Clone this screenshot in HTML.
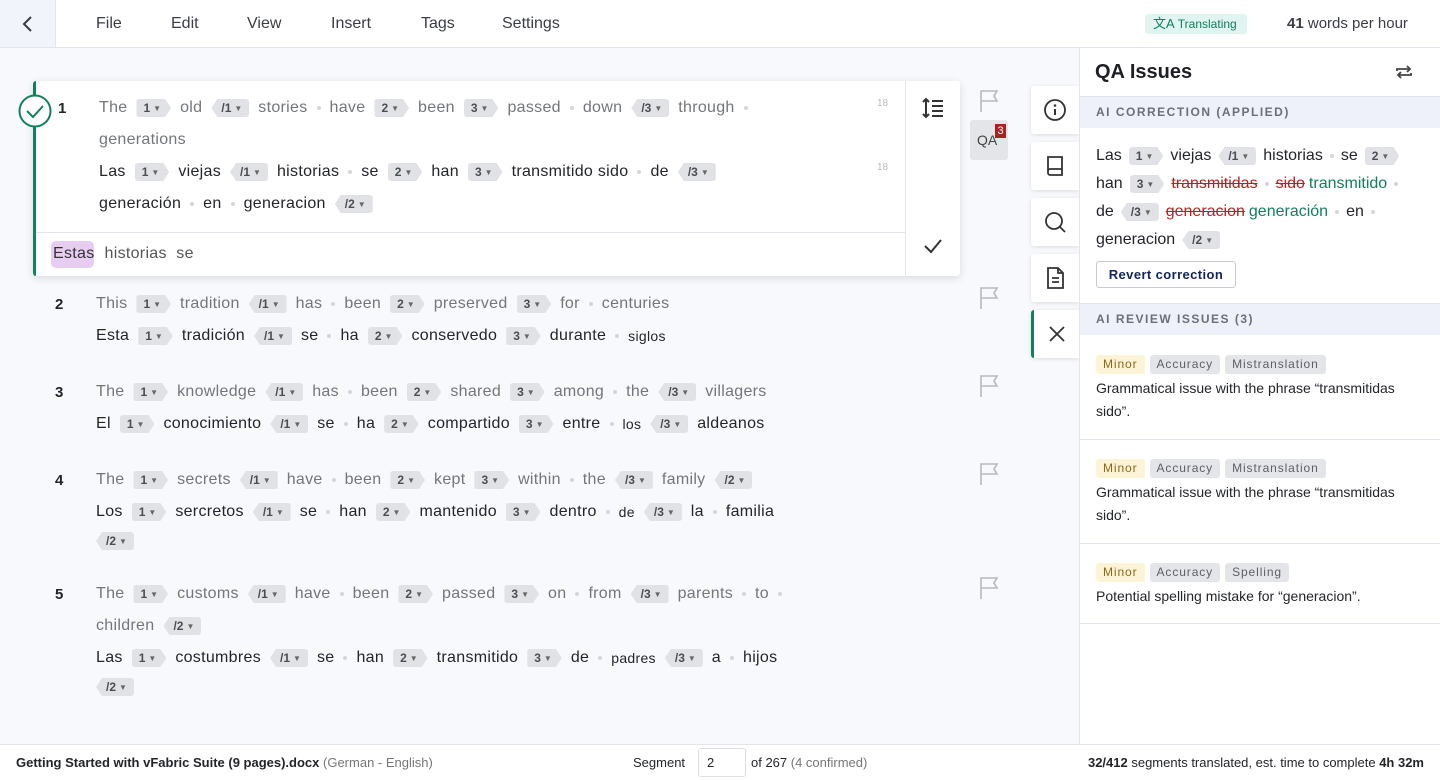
<!DOCTYPE html>
<html><head><meta charset="utf-8">
<style>
*{box-sizing:border-box;margin:0;padding:0}
body{width:1440px;height:780px;overflow:hidden;background:#f8f9fc;font-family:"Liberation Sans",sans-serif;color:#23252a;position:relative}
.abs{position:absolute}
.top{left:0;top:0;width:1440px;height:48px;background:#fff;border-bottom:1px solid #e3e5ea}
.back{left:0;top:0;width:56px;height:47px;background:#f1f4fb;border-right:1px solid #e3e5ea}
.menu{top:15px;font-size:16px;color:#3a3d44}
.line{position:absolute;display:flex;align-items:center;gap:9px;font-size:16px;white-space:nowrap;height:22px;letter-spacing:.3px}
.src{color:#73767c}
.tgt{color:#23252a}
.t{display:inline-flex;align-items:center;height:18px;background:#e1e2e6;font-size:12px;font-weight:bold;color:#4a4d54;padding:0 10px 0 7px;clip-path:polygon(0 0,calc(100% - 6px) 0,100% 50%,calc(100% - 6px) 100%,0 100%);border-radius:3px 0 0 3px;letter-spacing:0}
.c{display:inline-flex;align-items:center;height:18px;background:#e1e2e6;font-size:12px;font-weight:bold;color:#4a4d54;padding:0 7px 0 10px;clip-path:polygon(6px 0,100% 0,100% 100%,6px 100%,0 50%);border-radius:0 3px 3px 0;letter-spacing:0}
.t i,.c i{font-style:normal;font-size:8px;margin-left:3px;color:#666}
.d{width:4px;height:4px;border-radius:50%;background:#d4d6da;display:inline-block}
.num{position:absolute;font-size:15px;font-weight:bold;color:#23252a}
.flag{position:absolute}
.side{left:1031px;width:48px;height:48px;background:#fff;box-shadow:0 1px 4px rgba(0,0,0,.12);border-radius:3px 0 0 3px;display:flex;align-items:center;justify-content:center}
.rp{left:1079px;top:48px;width:361px;height:696px;background:#fff;border-left:1px solid #e3e5ea}
.rp .line{gap:7px;letter-spacing:0}
.sh{position:absolute;left:0;width:361px;height:31px;background:#eef1fa;font-size:12px;letter-spacing:1.5px;color:#6b6f78;padding:8px 16px;font-weight:bold}
.pill{display:inline-block;height:19px;line-height:19px;padding:0 7px;border-radius:3px;font-size:12px;letter-spacing:.9px;background:#e4e5e9;color:#5d6068;margin-right:5px}
.pill.m{background:#fdf3d6;color:#8a6a14}
.iss{position:absolute;left:16px;width:330px;font-size:14px;line-height:23px;color:#23252a}
.sep{position:absolute;left:0;width:361px;height:1px;background:#e3e5ea}
.bot{left:0;top:744px;width:1440px;height:36px;background:#fff;border-top:1px solid #e3e5ea;font-size:13px}
</style></head><body>
<div class="abs top"></div>
<div class="abs back"><svg class="abs" style="left:21px;top:15px" width="14" height="18" viewBox="0 0 14 18"><path d="M10 2 L3 9 L10 16" fill="none" stroke="#3a3d44" stroke-width="2"/></svg></div>
<div class="abs menu" style="left:96px">File</div>
<div class="abs menu" style="left:171px">Edit</div>
<div class="abs menu" style="left:247px">View</div>
<div class="abs menu" style="left:331px">Insert</div>
<div class="abs menu" style="left:421px">Tags</div>
<div class="abs menu" style="left:502px">Settings</div>
<div class="abs" style="left:1145px;top:14px;width:102px;height:20px;background:#e0f5ef;border-radius:3px;color:#12805c;font-size:12px;line-height:20px;padding-left:8px"><b style="font-weight:normal;font-size:13px">文A</b> Translating</div>
<div class="abs" style="left:1287px;top:15px;font-size:15px;color:#3a3d44"><b>41</b> words per hour</div>

<div class="abs" style="left:33px;top:81px;width:927px;height:195px;background:#fff;border-radius:3px;box-shadow:0 2px 8px rgba(30,40,70,.15);border-left:3px solid #12805c"></div>
<div class="abs" style="left:36px;top:232px;width:870px;height:1px;background:#e3e5ea"></div>
<div class="abs" style="left:905px;top:81px;width:1px;height:195px;background:#e3e5ea"></div>
<svg class="abs" style="left:18px;top:94px" width="34" height="34"><circle cx="17" cy="17" r="15.5" fill="#fff" stroke="#12805c" stroke-width="2"/><path d="M9 17 L15 23 L25 12" fill="none" stroke="#12805c" stroke-width="2"/></svg>
<div class="num" style="left:58px;top:100px">1</div>
<div class="line src" style="left:99px;top:97px">The <span class="t">1<i>▼</i></span> old <span class="c">/1<i>▼</i></span> stories <span class="d"></span> have <span class="t">2<i>▼</i></span> been <span class="t">3<i>▼</i></span> passed <span class="d"></span> down <span class="c">/3<i>▼</i></span> through <span class="d"></span></div>
<div class="line src" style="left:99px;top:129px">generations</div>
<div class="line tgt" style="left:99px;top:161px">Las <span class="t">1<i>▼</i></span> viejas <span class="c">/1<i>▼</i></span> historias <span class="d"></span> se <span class="t">2<i>▼</i></span> han <span class="t">3<i>▼</i></span> transmitido sido <span class="d"></span> de <span class="c">/3<i>▼</i></span></div>
<div class="line tgt" style="left:99px;top:193px">generación <span class="d"></span> en <span class="d"></span> generacion <span class="c">/2<i>▼</i></span></div>
<div class="abs" style="left:877px;top:98px;font-size:10px;color:#b7b9be">18</div>
<div class="abs" style="left:877px;top:162px;font-size:10px;color:#b7b9be">18</div>
<div class="abs" style="left:51px;top:241px;width:43px;height:27px;background:#e8cdf3;border-radius:5px"></div>
<div class="line" style="left:53px;top:243px;color:#555;gap:10px"><span style="color:#333">Estas</span> historias &nbsp;se</div>
<svg class="abs" style="left:922px;top:97px" width="22" height="22" viewBox="0 0 22 22"><path d="M4 2v18M1 5l3-3 3 3M1 17l3 3 3-3M10 4h11M10 9h11M10 14h11M10 19h11" fill="none" stroke="#333" stroke-width="2"/></svg>
<svg class="abs" style="left:923px;top:237px" width="20" height="18"><path d="M2 9 L8 15 L18 3" fill="none" stroke="#333" stroke-width="2"/></svg>

<svg class="flag" style="left:979px;top:89px" width="22" height="24" viewBox="0 0 22 24"><path d="M2 23V2h16l-3 5 3 5H2" fill="none" stroke="#b7b9be" stroke-width="1.6"/></svg>
<div class="abs" style="left:970px;top:120px;width:38px;height:40px;background:#e4e5e9;border-radius:3px;font-size:14px;color:#444;padding:12px 0 0 7px">QA</div>
<div class="abs" style="left:995px;top:124px;width:11px;height:14px;background:#a82222;color:#fff;font-size:11px;text-align:center;line-height:14px">3</div>
<svg class="flag" style="left:979px;top:286px" width="22" height="24" viewBox="0 0 22 24"><path d="M2 23V2h16l-3 5 3 5H2" fill="none" stroke="#b7b9be" stroke-width="1.6"/></svg>
<svg class="flag" style="left:979px;top:374px" width="22" height="24" viewBox="0 0 22 24"><path d="M2 23V2h16l-3 5 3 5H2" fill="none" stroke="#b7b9be" stroke-width="1.6"/></svg>
<svg class="flag" style="left:979px;top:462px" width="22" height="24" viewBox="0 0 22 24"><path d="M2 23V2h16l-3 5 3 5H2" fill="none" stroke="#b7b9be" stroke-width="1.6"/></svg>
<svg class="flag" style="left:979px;top:576px" width="22" height="24" viewBox="0 0 22 24"><path d="M2 23V2h16l-3 5 3 5H2" fill="none" stroke="#b7b9be" stroke-width="1.6"/></svg>

<div class="num" style="left:55px;top:296px">2</div>
<div class="line src" style="left:96px;top:293px">This <span class="t">1<i>▼</i></span> tradition <span class="c">/1<i>▼</i></span> has <span class="d"></span> been <span class="t">2<i>▼</i></span> preserved <span class="t">3<i>▼</i></span> for <span class="d"></span> centuries</div>
<div class="line tgt" style="left:96px;top:325px">Esta <span class="t">1<i>▼</i></span> tradición <span class="c">/1<i>▼</i></span> se <span class="d"></span> ha <span class="t">2<i>▼</i></span> conservedo <span class="t">3<i>▼</i></span> durante <span class="d"></span> <span style="font-size:14px">siglos</span></div>

<div class="num" style="left:55px;top:384px">3</div>
<div class="line src" style="left:96px;top:381px">The <span class="t">1<i>▼</i></span> knowledge <span class="c">/1<i>▼</i></span> has <span class="d"></span> been <span class="t">2<i>▼</i></span> shared <span class="t">3<i>▼</i></span> among <span class="d"></span> the <span class="c">/3<i>▼</i></span> villagers</div>
<div class="line tgt" style="left:96px;top:413px">El <span class="t">1<i>▼</i></span> conocimiento <span class="c">/1<i>▼</i></span> se <span class="d"></span> ha <span class="t">2<i>▼</i></span> compartido <span class="t">3<i>▼</i></span> entre <span class="d"></span> <span style="font-size:14px">los</span> <span class="c">/3<i>▼</i></span> aldeanos</div>

<div class="num" style="left:55px;top:472px">4</div>
<div class="line src" style="left:96px;top:469px">The <span class="t">1<i>▼</i></span> secrets <span class="c">/1<i>▼</i></span> have <span class="d"></span> been <span class="t">2<i>▼</i></span> kept <span class="t">3<i>▼</i></span> within <span class="d"></span> the <span class="c">/3<i>▼</i></span> family <span class="c">/2<i>▼</i></span></div>
<div class="line tgt" style="left:96px;top:501px">Los <span class="t">1<i>▼</i></span> sercretos <span class="c">/1<i>▼</i></span> se <span class="d"></span> han <span class="t">2<i>▼</i></span> mantenido <span class="t">3<i>▼</i></span> dentro <span class="d"></span> <span style="font-size:14px">de</span> <span class="c">/3<i>▼</i></span> la <span class="d"></span> familia</div>
<div class="line tgt" style="left:96px;top:530px"><span class="c">/2<i>▼</i></span></div>

<div class="num" style="left:55px;top:586px">5</div>
<div class="line src" style="left:96px;top:583px">The <span class="t">1<i>▼</i></span> customs <span class="c">/1<i>▼</i></span> have <span class="d"></span> been <span class="t">2<i>▼</i></span> passed <span class="t">3<i>▼</i></span> on <span class="d"></span> from <span class="c">/3<i>▼</i></span> parents <span class="d"></span> to <span class="d"></span></div>
<div class="line src" style="left:96px;top:615px">children <span class="c">/2<i>▼</i></span></div>
<div class="line tgt" style="left:96px;top:647px">Las <span class="t">1<i>▼</i></span> costumbres <span class="c">/1<i>▼</i></span> se <span class="d"></span> han <span class="t">2<i>▼</i></span> transmitido <span class="t">3<i>▼</i></span> de <span class="d"></span> <span style="font-size:14px">padres</span> <span class="c">/3<i>▼</i></span> a <span class="d"></span> hijos</div>
<div class="line tgt" style="left:96px;top:676px"><span class="c">/2<i>▼</i></span></div>

<div class="abs side" style="top:86px"><svg width="24" height="24"><circle cx="12" cy="12" r="10" fill="none" stroke="#333" stroke-width="1.8"/><path d="M12 11v6" stroke="#333" stroke-width="2"/><circle cx="12" cy="7.5" r="1.3" fill="#333"/></svg></div>
<div class="abs side" style="top:142px"><svg width="24" height="24"><path d="M5 3h14v18H7a2 2 0 0 1-2-2zM5 17a2 2 0 0 1 2-2h12" fill="none" stroke="#333" stroke-width="1.8"/></svg></div>
<div class="abs side" style="top:198px"><svg width="24" height="24"><circle cx="11" cy="11" r="8" fill="none" stroke="#333" stroke-width="1.8"/><path d="M17 17l5 5" stroke="#333" stroke-width="1.8"/></svg></div>
<div class="abs side" style="top:254px"><svg width="24" height="24"><path d="M5 2h10l5 5v15H5zM15 2v5h5M9 12h7M9 16h7" fill="none" stroke="#333" stroke-width="1.8"/></svg></div>
<div class="abs side" style="top:310px;border-left:3px solid #12805c"><svg width="20" height="20"><path d="M3 3l14 14M17 3L3 17" stroke="#333" stroke-width="1.8"/></svg></div>

<div class="abs rp">
  <div class="abs" style="left:15px;top:13px;font-size:20px;font-weight:bold;color:#1d1f24">QA Issues</div>
  <svg class="abs" style="left:314px;top:14px" width="20" height="20" viewBox="0 0 20 20"><path d="M3 9V7h13M13 4l3 3-3 3M17 11v2H4M7 16l-3-3 3-3" fill="none" stroke="#444" stroke-width="1.8"/></svg>
  <div class="sep" style="top:48px"></div>
  <div class="sh" style="top:49px">AI CORRECTION (APPLIED)</div>
  <div class="line tgt" style="left:16px;top:97px">Las <span class="t">1<i>▼</i></span> viejas <span class="c">/1<i>▼</i></span> historias <span class="d"></span> se <span class="t">2<i>▼</i></span></div>
  <div class="line tgt" style="left:16px;top:125px">han <span class="t">3<i>▼</i></span> <s style="color:#b42323">transmitidas</s> <span class="d"></span> <s style="color:#b42323">sido</s><span style="color:#12805c;margin-left:-3px">transmitido</span> <span class="d"></span></div>
  <div class="line tgt" style="left:16px;top:153px">de <span class="c">/3<i>▼</i></span> <s style="color:#b42323">generacion</s><span style="color:#12805c;margin-left:-3px">generación</span> <span class="d"></span> en <span class="d"></span></div>
  <div class="line tgt" style="left:16px;top:181px">generacion <span class="c">/2<i>▼</i></span></div>
  <div class="abs" style="left:16px;top:213px;width:140px;height:27px;border:1px solid #c7cad1;border-radius:3px;font-size:13px;font-weight:bold;color:#13255e;text-align:center;line-height:25px;letter-spacing:.4px">Revert correction</div>
  <div class="sep" style="top:255px"></div>
  <div class="sh" style="top:256px">AI REVIEW ISSUES (3)</div>
  <div class="iss" style="top:304px"><span class="pill m">Minor</span><span class="pill">Accuracy</span><span class="pill">Mistranslation</span></div>
  <div class="iss" style="top:329px">Grammatical issue with the phrase “transmitidas sido”.</div>
  <div class="sep" style="top:391px"></div>
  <div class="iss" style="top:408px"><span class="pill m">Minor</span><span class="pill">Accuracy</span><span class="pill">Mistranslation</span></div>
  <div class="iss" style="top:433px">Grammatical issue with the phrase “transmitidas sido”.</div>
  <div class="sep" style="top:495px"></div>
  <div class="iss" style="top:512px"><span class="pill m">Minor</span><span class="pill">Accuracy</span><span class="pill">Spelling</span></div>
  <div class="iss" style="top:537px">Potential spelling mistake for “generacion”.</div>
  <div class="sep" style="top:575px"></div>
</div>

<div class="abs bot">
  <div class="abs" style="left:16px;top:10px"><b>Getting Started with vFabric Suite (9 pages).docx</b> <span style="color:#777">(German - English)</span></div>
  <div class="abs" style="left:633px;top:10px">Segment</div>
  <div class="abs" style="left:698px;top:3px;width:48px;height:29px;border:1px solid #dcdee3;border-radius:3px;padding:6px 0 0 8px">2</div>
  <div class="abs" style="left:751px;top:10px">of 267 <span style="color:#777">(4 confirmed)</span></div>
  <div class="abs" style="right:16px;top:10px"><b>32/412</b> segments translated, est. time to complete <b>4h 32m</b></div>
</div>
</body></html>
